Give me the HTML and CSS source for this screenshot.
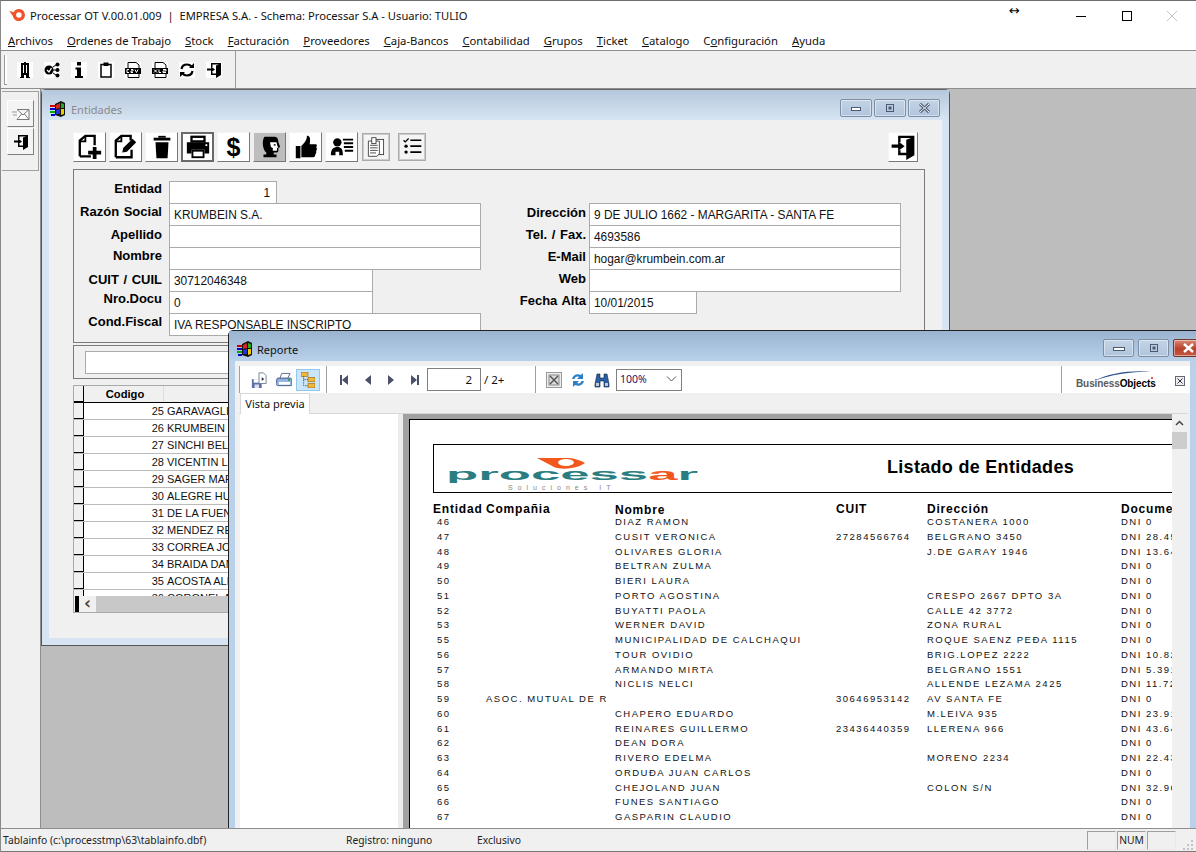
FILE: index.html
```html
<!DOCTYPE html>
<html lang="es">
<head>
<meta charset="utf-8">
<title>Processar OT</title>
<link rel="stylesheet" href="styles.css">
</head>
<body>
<svg class="defs" width="0" height="0" aria-hidden="true">
  <symbol id="winflag" viewBox="0 0 16 16">
    <rect x="0" y="4" width="5" height="2" fill="#c00"/><rect x="0" y="7" width="5" height="2" fill="#00c"/><rect x="0" y="10" width="5" height="2" fill="#0a0"/><rect x="1" y="13" width="4" height="2" fill="#00c"/>
    <path d="M5 3L11 0L15 2V14L11 16L5 14Z" fill="#111"/>
    <path d="M6 4L10 2V7L6 8Z" fill="#d22"/><path d="M11 2L14 3V7L11 7Z" fill="#2a2"/><path d="M6 9L10 8V13L6 13Z" fill="#23d"/><path d="M11 8L14 8V13L11 14Z" fill="#ec0"/>
  </symbol>
  <symbol id="door" viewBox="0 0 16 16">
    <path d="M5 1H15V13L10 16V13H5V10H6.500V11.500H10V3.500L13 2.500H6.500V5H5Z" fill="#000"/>
    <path d="M1 6.500H5V4.500L9 7.500L5 10.500V8.500H1Z" fill="#000"/>
  </symbol>
</svg>
<div class="app">
  <header class="titlebar">
    <svg class="applogo" viewBox="0 0 18 14"><path d="M0 2L5 3.500C6 1 8 0 10.500 0C14.500 0 17 3 17 6.500C17 10.500 14 13 10.500 13C7 13 4.500 10.500 4 7.500Z" fill="#f0532a"/><circle cx="10.500" cy="6.500" r="3" fill="#fff"/></svg>
    <span class="apptitle">Processar OT V.00.01.009 &nbsp;| &nbsp;EMPRESA S.A. - Schema: Processar S.A - Usuario: TULIO</span>
    <span class="resize-hint">↔</span>
    <div class="winctl">
      <span class="ctl"><svg width="10" height="10" viewBox="0 0 10 10"><path d="M0 5.500H10" stroke="#000"/></svg></span>
      <span class="ctl"><svg width="10" height="10" viewBox="0 0 10 10"><rect x=".5" y=".5" width="9" height="9" fill="none" stroke="#000"/></svg></span>
      <span class="ctl"><svg width="10" height="10" viewBox="0 0 10 10"><path d="M0 0L10 10M10 0L0 10" stroke="#c4c4c4"/></svg></span>
    </div>
  </header>
  <nav class="menubar">
    <span><u>A</u>rchivos</span><span><u>O</u>rdenes de Trabajo</span><span><u>S</u>tock</span><span><u>F</u>acturación</span><span><u>P</u>roveedores</span><span><u>C</u>aja-Bancos</span><span><u>C</u>ontabilidad</span><span><u>G</u>rupos</span><span><u>T</u>icket</span><span><u>C</u>atalogo</span><span>C<u>o</u>nfiguración</span><span><u>A</u>yuda</span>
  </nav>
  <div class="toolbar">
    <div class="toolgroup">
      <i class="grip"></i>
      <span class="ti"><svg viewBox="0 0 16 16"><path d="M4 1H7V0H9V1H12V15H13V16H9V13H7V16H3V15H4Z" fill="#000"/><path d="M6 3H7V11H6ZM9 3H10V11H9Z" fill="#fff"/></svg></span>
      <span class="ti"><svg viewBox="0 0 16 16"><circle cx="5" cy="8" r="4.500" fill="#000"/><path d="M3 8L5 10L7.500 6" stroke="#fff" stroke-width="1.300" fill="none"/><circle cx="13.500" cy="2.500" r="2" fill="#000"/><circle cx="13.500" cy="8" r="2" fill="#000"/><circle cx="13.500" cy="13.500" r="2" fill="#000"/><path d="M9 5L12 3M9 8H12M9 11L12 13" stroke="#000"/></svg></span>
      <span class="ti"><svg viewBox="0 0 16 16"><rect x="6" y="0" width="4" height="3.500" fill="#000"/><path d="M4.500 5.500H10V14H12V16H4V14H6V7.500H4.500Z" fill="#000"/></svg></span>
      <span class="ti"><svg viewBox="0 0 16 16"><path d="M3 2.500H13V15H3Z" fill="#fff" stroke="#000" stroke-width="1.500"/><rect x="5.500" y="0.500" width="5" height="3.500" fill="#000"/></svg></span>
      <span class="ti"><svg viewBox="0 0 16 16"><path d="M3 .5H11L14 3V15.500H3Z" fill="#fff" stroke="#000"/><rect x="0" y="6" width="16" height="6" fill="#000"/><path d="M2 7.500H4M2 7.500V10.500H4M6 7.500H8V9H6V10.500H8M10 7.500L11.500 10.500L13 7.500" stroke="#fff" fill="none"/></svg></span>
      <span class="ti"><svg viewBox="0 0 16 16"><path d="M3 .5H11L14 3V15.500H3Z" fill="#fff" stroke="#000"/><rect x="0" y="6" width="16" height="6" fill="#000"/><path d="M2 7.500L5 10.500M5 7.500L2 10.500M7 7.500V10.500H9M11 7.500H14V9H11V10.500H14" stroke="#fff" fill="none"/></svg></span>
      <span class="ti"><svg viewBox="0 0 16 16"><path d="M2.500 7C3 4 5.500 2.500 8 2.500C10 2.500 11.500 3.300 12.500 4.500M13.500 9C13 12 10.500 13.500 8 13.500C6 13.500 4.500 12.700 3.500 11.500" fill="none" stroke="#000" stroke-width="2.200"/><path d="M10 6H15V1ZM6 10H1V15Z" fill="#000"/></svg></span>
      <span class="ti"><svg><use href="#door"/></svg></span>
    </div>
  </div>
  <main class="workspace">
    <aside class="rail">
      <div class="railgroup">
        <span class="railbtn"><svg width="18" height="14" viewBox="0 0 18 14"><path d="M5 2.500H17V12.500H5M5 2.500L11 8L17 2.500M5 12.500L9.500 7M17 12.500L12.500 7" fill="#fff" stroke="#777"/><path d="M0 5H5M1 8H5" stroke="#999"/></svg></span>
        <span class="railbtn"><svg width="16" height="16"><use href="#door"/></svg></span>
      </div>
    </aside>
    <div class="mdi">
      <section class="win win-ent">
        <div class="win-title">
          <svg class="flag"><use href="#winflag"/></svg>
          <span class="win-name off">Entidades</span>
          <div class="wbtns">
            <span class="wb"><svg width="10" height="8" viewBox="0 0 10 8"><rect x=".5" y="3.500" width="9" height="3" fill="#fff" stroke="#4a5a70"/></svg></span>
            <span class="wb"><svg width="10" height="10" viewBox="0 0 10 10"><rect x="1.500" y="1.500" width="7" height="7" fill="none" stroke="#4a5a70"/><rect x="3.500" y="3.500" width="3" height="3" fill="#4a5a70"/></svg></span>
            <span class="wb"><svg width="11" height="10" viewBox="0 0 11 10"><path d="M1 1L10 9M10 1L1 9" stroke="#4a5a70" stroke-width="3"/><path d="M1 1L10 9M10 1L1 9" stroke="#fff"/></svg></span>
          </div>
        </div>
        <div class="win-body">
          <div class="btnrow">
            <span class="bt"><svg viewBox="0 0 28 28"><path d="M3 24V7L9 2H19V12M15 24H3" fill="none" stroke="#000" stroke-width="2.500"/><path d="M9 2V8H3" fill="none" stroke="#000" stroke-width="2"/><path d="M17 14H21V18H26V22H21V27H17V22H12V18H17Z" fill="#000"/></svg></span>
            <span class="bt"><svg viewBox="0 0 28 28"><path d="M3 25V7L9 2H19V7M20 17V25H3" fill="none" stroke="#000" stroke-width="2.500"/><path d="M9 2V8H3" fill="none" stroke="#000" stroke-width="2"/><path d="M10 20L11 15L21 5L25 9L15 19Z" fill="#000"/></svg></span>
            <span class="bt"><svg viewBox="0 0 28 28"><rect x="5" y="4" width="18" height="3" fill="#000"/><rect x="10" y="2" width="8" height="2" fill="#000"/><path d="M7 9H21L20 26H8Z" fill="#000"/></svg></span>
            <span class="bt bt-dark"><svg viewBox="0 0 28 28"><rect x="7" y="3" width="14" height="5" fill="#fff" stroke="#000" stroke-width="2.500"/><path d="M2 9H26V21H21V17H7V21H2Z" fill="#000"/><rect x="8" y="18" width="12" height="7" fill="#fff" stroke="#000" stroke-width="2"/><rect x="22" y="11" width="2" height="2" fill="#fff"/></svg></span>
            <span class="bt bt-dollar">$</span>
            <span class="bt bt-grey"><svg viewBox="0 0 28 28"><path d="M8 3H19C22 3 23 6 23 9L25 14L23 15V18C23 20 21 20 18 20V22H21V25H7V22H10V20C6 17 5 7 8 3Z" fill="#000"/><path d="M14 9H21L22 13L23 14.500L21.500 15V18H17V15L15 14Z" fill="#fff"/><rect x="18" y="11" width="2" height="1.500" fill="#000"/></svg></span>
            <span class="bt"><svg viewBox="0 0 28 28"><path d="M3 13H8V26H3ZM9 13C12 10 15 7 15 2C18 2 19 4 18 11H25C26 12 26 13 25 14C26 16 26 17 25 18C25 20 25 21 24 22C24 24 23 25 22 25H9Z" fill="#000"/></svg></span>
            <span class="bt"><svg viewBox="0 0 28 28"><circle cx="9" cy="9" r="4.500" fill="#000"/><path d="M2 23C2 16 5 14 9 14C13 14 15 16 15 23H11V19H7V23Z" fill="#000"/><path d="M15 6H26M16 10H26M16 14H26M17 18H26" stroke="#000" stroke-width="2"/></svg></span>
            <span class="bt bt-off"><svg viewBox="0 0 26 26"><rect x="9" y="4" width="13" height="18" fill="#fff" stroke="#333"/><path d="M4 6H17V21L14 24H4Z" fill="#fff" stroke="#333"/><rect x="8" y="2" width="5" height="7" fill="#fff" stroke="#333"/><path d="M6 11H15M6 14H15M6 17H15M6 20H13" stroke="#333"/></svg></span>
            <span class="bt bt-off"><svg viewBox="0 0 26 26"><path d="M3 5L5 7L9 3" stroke="#000" stroke-width="1.500" fill="none"/><path d="M11 5H24M11 12H24M11 19H24" stroke="#000" stroke-width="2"/><circle cx="6" cy="12" r="2" fill="#000"/><circle cx="6" cy="19" r="2" fill="#000"/></svg></span>
            <span class="bt bt-exit"><svg viewBox="0 0 16 16"><use href="#door"/></svg></span>
          </div>
          <div class="panel form">
            <div class="col">
              <div class="row"><label>Entidad</label><span class="fld fld-s num">1</span></div>
              <div class="row"><label class="l1">Razón Social</label><span class="fld">KRUMBEIN S.A.</span></div>
              <div class="row"><label class="l2">Apellido</label><span class="fld"></span></div>
              <div class="row"><label class="l1">Nombre</label><span class="fld"></span></div>
              <div class="row"><label class="l3">CUIT / CUIL</label><span class="fld fld-m">30712046348</span></div>
              <div class="row"><label>Nro.Docu</label><span class="fld fld-m">0</span></div>
              <div class="row"><label class="l1">Cond.Fiscal</label><span class="fld">IVA RESPONSABLE INSCRIPTO</span></div>
            </div>
            <div class="col col-r">
              <div class="row"><label class="l2">Dirección</label><span class="fld">9 DE JULIO 1662 - MARGARITA - SANTA FE</span></div>
              <div class="row"><label class="l2">Tel. / Fax.</label><span class="fld">4693586</span></div>
              <div class="row"><label class="l2">E-Mail</label><span class="fld">hogar@krumbein.com.ar</span></div>
              <div class="row"><label class="l2">Web</label><span class="fld"></span></div>
              <div class="row"><label class="l2">Fecha Alta</label><span class="fld fld-s">10/01/2015</span></div>
            </div>
          </div>
          <div class="panel search"><span class="searchbox"></span></div>
          <div class="grid">
            <div class="ghead"><i class="sel"></i><b class="gc1">Codigo</b><b class="gc2"></b></div>
            <div class="gbody">
              <div class="grow"><i class="sel"></i><span class="gc1">25</span><span class="gc2">GARAVAGLIA</span></div>
              <div class="grow"><i class="sel"></i><span class="gc1">26</span><span class="gc2">KRUMBEIN M</span></div>
              <div class="grow"><i class="sel"></i><span class="gc1">27</span><span class="gc2">SINCHI BELEN</span></div>
              <div class="grow"><i class="sel"></i><span class="gc1">28</span><span class="gc2">VICENTIN LILIANA</span></div>
              <div class="grow"><i class="sel"></i><span class="gc1">29</span><span class="gc2">SAGER MARIA</span></div>
              <div class="grow"><i class="sel"></i><span class="gc1">30</span><span class="gc2">ALEGRE HUGO</span></div>
              <div class="grow"><i class="sel"></i><span class="gc1">31</span><span class="gc2">DE LA FUENTE</span></div>
              <div class="grow"><i class="sel"></i><span class="gc1">32</span><span class="gc2">MENDEZ RENE</span></div>
              <div class="grow"><i class="sel"></i><span class="gc1">33</span><span class="gc2">CORREA JOSE</span></div>
              <div class="grow"><i class="sel"></i><span class="gc1">34</span><span class="gc2">BRAIDA DANIEL</span></div>
              <div class="grow"><i class="sel"></i><span class="gc1">35</span><span class="gc2">ACOSTA ALDO</span></div>
              <div class="grow"><i class="sel"></i><span class="gc1">36</span><span class="gc2">CORONEL ANA</span></div>
            </div>
            <div class="gscroll"><i class="gblack"></i><span class="garrow">‹</span><i class="gtrack"></i></div>
          </div>
        </div>
      </section>

      <section class="win win-rep">
        <div class="win-title">
          <svg class="flag"><use href="#winflag"/></svg>
          <span class="win-name">Reporte</span>
          <div class="wbtns">
            <span class="wb"><svg width="12" height="8" viewBox="0 0 12 8"><rect x=".5" y="3.500" width="11" height="3" fill="#fff" stroke="#4a5a70"/></svg></span>
            <span class="wb"><svg width="10" height="10" viewBox="0 0 10 10"><rect x="1.500" y="1.500" width="7" height="7" fill="none" stroke="#4a5a70"/><rect x="3.500" y="3.500" width="3" height="3" fill="#4a5a70"/></svg></span>
            <span class="wb wb-close"><svg width="11" height="10" viewBox="0 0 11 10"><path d="M1 1L10 9M10 1L1 9" stroke="#fff" stroke-width="2.500"/></svg></span>
          </div>
        </div>
        <div class="rep-body">
          <div class="rtool">
            <div class="rgroup">
              <span class="ri"><svg viewBox="0 0 16 18"><rect x="0" y="8" width="11" height="10" fill="#5a6fa8"/><rect x="2" y="8" width="7" height="4" fill="#fff"/><rect x="3" y="14" width="5" height="4" fill="#dde"/><path d="M8 1H13L16 4V13H8Z" fill="#fff" stroke="#6a7a90"/><path d="M11 6L14 8L11 10Z" fill="#334"/></svg></span>
              <span class="ri"><svg viewBox="0 0 17 16"><path d="M6 1L15 1L12 7H4Z" fill="#fff" stroke="#5a6a88"/><path d="M1 7C1 6 2 6 3 6H15C16 6 17 7 17 8V13C17 14 16 14 15 14H3C1 14 0 13 0 12Z" fill="#8fb0e0" stroke="#44587a"/><rect x="3" y="10" width="12" height="3" fill="#fff"/><rect x="13" y="7" width="2" height="2" fill="#2a2"/></svg></span>
              <span class="ri ri-on"><svg viewBox="0 0 16 18"><rect x="0" y="0" width="8" height="5" fill="#f0b83a" stroke="#9a7420" stroke-width=".8"/><rect x="8" y="6" width="8" height="5" fill="#f0b83a" stroke="#9a7420" stroke-width=".8"/><rect x="8" y="13" width="8" height="5" fill="#f0b83a" stroke="#9a7420" stroke-width=".8"/><path d="M3 5V15.500H8M3 8.500H8" stroke="#333" stroke-dasharray="1 1" fill="none"/></svg></span>
            </div>
            <div class="rgroup rnav">
              <svg class="nv" viewBox="0 0 8 10"><rect x="0" y="0" width="2" height="10" fill="#4a4f6a"/><path d="M8 0V10L2 5Z" fill="#4a4f6a"/></svg>
              <svg class="nv" viewBox="0 0 8 10"><path d="M7 0V10L1 5Z" fill="#4a4f6a"/></svg>
              <svg class="nv" viewBox="0 0 8 10"><path d="M1 0V10L7 5Z" fill="#4a4f6a"/></svg>
              <svg class="nv" viewBox="0 0 8 10"><path d="M0 0V10L6 5Z" fill="#4a4f6a"/><rect x="6" y="0" width="2" height="10" fill="#4a4f6a"/></svg>
              <span class="pageinput">2</span>
              <span class="pagetot">/ 2+</span>
            </div>
            <div class="rgroup rgroup3">
              <span class="ri"><svg viewBox="0 0 16 16"><rect x=".5" y=".5" width="15" height="15" fill="#eee" stroke="#999"/><rect x="3" y="3" width="10" height="10" fill="#ddd" stroke="#888"/><path d="M4 4L12 12M12 4L4 12" stroke="#555" stroke-width="1.500"/></svg></span>
              <span class="ri"><svg viewBox="0 0 16 16"><path d="M2 7C3 3 7 1 11 3L13 1V7H7L9 5C7 4 5 5 4.500 7Z" fill="#2c7fc4"/><path d="M14 9C13 13 9 15 5 13L3 15V9H9L7 11C9 12 11 11 11.500 9Z" fill="#2c7fc4"/></svg></span>
              <span class="ri"><svg viewBox="0 0 16 16"><path d="M3 2H6V6H10V2H13L15 12V15H10V9H6V15H1V12Z" fill="#2a5fa8" stroke="#123" stroke-width=".6"/><rect x="2" y="11" width="3" height="3" fill="#bcd"/><rect x="11" y="11" width="3" height="3" fill="#bcd"/></svg></span>
              <span class="combo">100%<svg width="11" height="6" viewBox="0 0 11 6"><path d="M1 .5L5.500 5L10 .5" fill="none" stroke="#555"/></svg></span>
            </div>
            <div class="bo">
              <svg class="bo-arc" width="62" height="12" viewBox="0 0 62 12"><path d="M2 11C16 3 38 0 59 1.500C38 1.500 18 5 2 11Z" fill="#2c4f8f"/><circle cx="60" cy="8" r="1" fill="#d22"/></svg>
              <span class="bo-text"><span class="bo-a">Business</span>Objects</span>
            </div>
            <span class="rclose"><svg width="10" height="10" viewBox="0 0 10 10"><rect x=".5" y=".5" width="9" height="9" fill="#eee" stroke="#667"/><path d="M2.500 2.500L7.500 7.500M7.500 2.500L2.500 7.500" stroke="#334"/></svg></span>
          </div>
          <div class="rtabs"><span class="rtab">Vista previa</span></div>
          <div class="rview">
            <div class="rtree"></div>
            <div class="rsplit"></div>
            <div class="rpagewrap">
              <div class="rpage">
                <div class="rhead">
                  <div class="logo">
                    <svg class="eye" width="50" height="12" viewBox="0 0 50 12"><path d="M0 0H17C24 -2 40 0 48 5C40 11 24 12 17 9Z" fill="#f2571d"/><ellipse cx="29" cy="4.500" rx="8" ry="3.500" fill="#fff"/></svg>
                    <div class="logotext">process<span class="logo-o">a</span>r</div>
                    <div class="logosub">Soluciones IT</div>
                  </div>
                  <h1 class="rtitle">Listado de Entidades</h1>
                </div>
                <div class="rcols rr">
                  <b>Entidad</b><b>Compañia</b><b class="down">Nombre</b><b>CUIT</b><b>Dirección</b><b>Documento</b>
                </div>
                <div class="rows">
                  <div class="rr"><i>46</i><i></i><i>DIAZ RAMON</i><i></i><i>COSTANERA 1000</i><i>DNI 0</i></div>
                  <div class="rr"><i>47</i><i></i><i>CUSIT VERONICA</i><i>27284566764</i><i>BELGRANO 3450</i><i>DNI 28.452.110</i></div>
                  <div class="rr"><i>48</i><i></i><i>OLIVARES GLORIA</i><i></i><i>J.DE GARAY 1946</i><i>DNI 13.640.220</i></div>
                  <div class="rr"><i>49</i><i></i><i>BELTRAN ZULMA</i><i></i><i></i><i>DNI 0</i></div>
                  <div class="rr"><i>50</i><i></i><i>BIERI LAURA</i><i></i><i></i><i>DNI 0</i></div>
                  <div class="rr"><i>51</i><i></i><i>PORTO AGOSTINA</i><i></i><i>CRESPO 2667 DPTO 3A</i><i>DNI 0</i></div>
                  <div class="rr"><i>52</i><i></i><i>BUYATTI PAOLA</i><i></i><i>CALLE 42 3772</i><i>DNI 0</i></div>
                  <div class="rr"><i>53</i><i></i><i>WERNER DAVID</i><i></i><i>ZONA RURAL</i><i>DNI 0</i></div>
                  <div class="rr"><i>55</i><i></i><i>MUNICIPALIDAD DE CALCHAQUI</i><i></i><i>ROQUE SAENZ PEÐA 1115</i><i>DNI 0</i></div>
                  <div class="rr"><i>56</i><i></i><i>TOUR OVIDIO</i><i></i><i>BRIG.LOPEZ 2222</i><i>DNI 10.820.110</i></div>
                  <div class="rr"><i>57</i><i></i><i>ARMANDO MIRTA</i><i></i><i>BELGRANO 1551</i><i>DNI 5.391.220</i></div>
                  <div class="rr"><i>58</i><i></i><i>NICLIS NELCI</i><i></i><i>ALLENDE LEZAMA 2425</i><i>DNI 11.720.330</i></div>
                  <div class="rr"><i>59</i><i class="co">ASOC. MUTUAL DE RIESGOS</i><i></i><i>30646953142</i><i>AV SANTA FE</i><i>DNI 0</i></div>
                  <div class="rr"><i>60</i><i></i><i>CHAPERO EDUARDO</i><i></i><i>M.LEIVA 935</i><i>DNI 23.910.440</i></div>
                  <div class="rr"><i>61</i><i></i><i>REINARES GUILLERMO</i><i>23436440359</i><i>LLERENA 966</i><i>DNI 43.640.550</i></div>
                  <div class="rr"><i>62</i><i></i><i>DEAN DORA</i><i></i><i></i><i>DNI 0</i></div>
                  <div class="rr"><i>63</i><i></i><i>RIVERO EDELMA</i><i></i><i>MORENO 2234</i><i>DNI 22.430.660</i></div>
                  <div class="rr"><i>64</i><i></i><i>ORDUÐA JUAN CARLOS</i><i></i><i></i><i>DNI 0</i></div>
                  <div class="rr"><i>65</i><i></i><i>CHEJOLAND JUAN</i><i></i><i>COLON S/N</i><i>DNI 32.960.770</i></div>
                  <div class="rr"><i>66</i><i></i><i>FUNES SANTIAGO</i><i></i><i></i><i>DNI 0</i></div>
                  <div class="rr"><i>67</i><i></i><i>GASPARIN CLAUDIO</i><i></i><i></i><i>DNI 0</i></div>
                </div>
              </div>
            </div>
            <div class="rscroll"><span class="rs-up"><svg width="9" height="6" viewBox="0 0 9 6"><path d="M1 5L4.500 1.500L8 5" fill="none" stroke="#444" stroke-width="1.500"/></svg></span><i class="rs-thumb"></i></div>
          </div>
        </div>
      </section>
    </div>
  </main>
  <footer class="statusbar">
    <span class="st st-1">Tablainfo (c:\processtmp\63\tablainfo.dbf)</span>
    <span class="st st-2">Registro: ninguno</span>
    <span class="st st-3">Exclusivo</span>
    <div class="stpanels"><span class="sp"></span><span class="sp">NUM</span><span class="sp"></span></div>
    <svg class="sgrip" width="12" height="12" viewBox="0 0 12 12"><path d="M9 2h2v2H9zM9 6h2v2H9zM5 6h2v2H5zM9 10h2v2H9zM5 10h2v2H5zM1 10h2v2H1z" fill="#c4c4c4"/></svg>
  </footer>
</div>
</body>
</html>
```

FILE: styles.css
```css
* { box-sizing: border-box; }
html, body { margin: 0; padding: 0; }
body { width: 1196px; height: 852px; overflow: hidden; background: #f0f0f0; font-family: "Liberation Sans", Arial, sans-serif; color: #000; }
.defs { position: absolute; }
i { font-style: normal; }

.app { width: 1196px; height: 852px; display: flex; flex-direction: column; border-top: 1px solid #6e6e6e; border-left: 1px solid #8a8a8a; overflow: hidden; }

.titlebar { height: 29px; flex: none; background: #fff; display: flex; align-items: center; position: relative; padding-left: 8px; }
.applogo { width: 17px; height: 13px; flex: none; }
.apptitle { font: 11.200px "Noto Sans", sans-serif; margin-left: 4px; white-space: nowrap; color: #111; }
.resize-hint { position: absolute; left: 1008px; top: 0; font: 13px "DejaVu Sans", sans-serif; line-height: 20px; }
.winctl { margin-left: auto; display: flex; padding-right: 1px; }
.ctl { width: 45.500px; height: 29px; display: flex; align-items: center; justify-content: center; }

.menubar { height: 20px; flex: none; background: #fff; display: flex; gap: 14px; padding-left: 7px; font: 11.300px "Noto Sans", sans-serif; line-height: 22px; white-space: nowrap; }
.menubar span { color: #111; }

.toolbar { height: 39px; flex: none; background: #f0f0f0; border-top: 1px solid #8e8e8e; border-bottom: 1px solid #8e8e8e; position: relative; }
.toolgroup { width: 235px; height: 37px; border-right: 1px solid #9a9a9a; display: flex; align-items: center; padding-left: 3px; }
.grip { width: 3px; height: 30px; margin-right: 10px; border-left: 1px solid #9a9a9a; border-bottom: 1px solid #9a9a9a; background: #fff; flex: none; }
.ti { width: 16px; height: 16px; margin-right: 11px; background: #fff; flex: none; display: block; }
.ti svg { width: 16px; height: 16px; display: block; }

.workspace { flex: 1; display: flex; min-height: 0; }
.rail { width: 40px; flex: none; background: #f0f0f0; border-right: 1px solid #8e8e8e; padding: 2px 1px 0 1px; position: relative; }
.railgroup { height: 80px; width: 37px; border-top: 1px solid #a0a0a0; border-bottom: 1px solid #a0a0a0; border-right: 1px solid #a0a0a0; padding: 8px 0 0 5px; display: flex; flex-direction: column; gap: 1px; }
.railbtn { width: 27px; height: 27px; background: #f4f4f4; border: 1px solid; border-color: #fff #808080 #808080 #fff; display: flex; align-items: center; justify-content: center; }

.mdi { flex: 1; background: #bdbdbd; position: relative; overflow: hidden; }

.win { position: absolute; display: flex; flex-direction: column; }
.win-ent { left: 0; top: 0; width: 909px; height: 557px; background: #d6e4f3; border: 1px solid #555; border-top-color: #666; border-radius: 5px 5px 0 0; }
.win-rep { left: 187px; top: 241px; width: 980px; height: 520px; background: #b9d1ea; border: 1px solid #222; border-radius: 5px 5px 0 0; }

.win-title { height: 30px; flex: none; display: flex; align-items: center; padding-left: 8px; }
.win-ent .win-title { background: linear-gradient(#b6c8dc, #d6e4f3); padding-top: 8px; }
.win-rep .win-title { background: linear-gradient(#9ab3d0, #b9d1ea); padding-top: 6px; }
.flag { width: 16px; height: 16px; flex: none; }
.win-name { font: 11px "Noto Sans", sans-serif; margin-left: 5px; color: #111; }
.win-rep .win-name { margin-left: 4px; }
.win-name.off { color: #8a8a8a; }
.wbtns { margin-left: auto; display: flex; gap: 2px; margin-right: 9px; margin-top: -2px; }
.win-rep .wbtns { margin-right: 3px; gap: 4px; margin-top: -2px; }
.wb { width: 32px; height: 18px; display: flex; align-items: center; justify-content: center; border: 1px solid #7d8ea5; border-radius: 2px; background: linear-gradient(#c4d4e6, #b0c4dc); box-shadow: inset 0 0 0 1px rgba(255,255,255,.45); }
.win-rep .wb { width: 31px; }
.wb-close { background: linear-gradient(#d88a78, #b8402a 55%, #c65a44); border-color: #70382c; }

.win-body { flex: 1; margin: 0 7px 7px 7px; background: #f0f0f0; padding: 12px 24px 0 24px; min-height: 0; overflow: hidden; }
.btnrow { display: flex; gap: 3px; height: 37px; align-items: flex-start; position: relative; }
.bt { width: 33px; height: 30px; flex: none; background: #fff; border: 1px solid; border-color: #f4f4f4 #777 #777 #f4f4f4; display: flex; align-items: center; justify-content: center; }
.bt svg { width: 26px; height: 26px; display: block; }
.bt-dark { border: 2px solid #6a6a6a; }
.bt-grey { background: #bdbdbd; border-color: #eee #777 #777 #eee; }
.bt-dollar { font: bold 25px "Liberation Sans", sans-serif; }
.bt-off { width: 28px; height: 28px; border: 1px solid #aaa; box-shadow: inset 0 0 0 1px #ccc; margin: 1px 4px 0 1px; background: #f4f4f4; }
.bt-off svg { width: 22px; height: 22px; }
.bt-exit { width: 30px; margin-left: auto; margin-right: 0; }
.panel { border: 1px solid #7a7a7a; background: #f0f0f0; }
.form { height: 174px; display: flex; padding-top: 11px; width: 852px; }
.col { width: 408px; flex: none; }
.col-r { padding-top: 22px; width: 428px; }
.row { height: 22px; display: flex; }
.row label { width: 88px; flex: none; text-align: right; font: bold 13px "Liberation Sans", sans-serif; line-height: 16px; word-spacing: 1px; white-space: nowrap; margin-right: 7px; }
.row .l1 { padding-top: 1px; }
.row .l2 { padding-top: 2px; }
.row .l3 { padding-top: 3px; }
.col-r .row label { width: 104px; margin-right: 3px; }
.fld { width: 312px; height: 23px; flex: none; background: #fff; border: 1px solid #aaa; font: 11.900px "Liberation Sans", sans-serif; line-height: 22px; padding-left: 4px; color: #111; white-space: nowrap; overflow: hidden; }
.fld-m { width: 204px; }
.fld-s { width: 108px; }
.num { text-align: right; padding-right: 6px; }
.search { height: 34px; margin-top: 2px; padding: 5px 0 0 11px; width: 852px; }
.searchbox { display: block; width: 600px; height: 23px; background: #fff; border: 1px solid #aaa; }

.grid { margin-top: 6px; width: 852px; height: 228px; border: 1px solid #aaa; background: #fff; position: relative; overflow: hidden; display: flex; flex-direction: column; }
.ghead { height: 17px; flex: none; display: flex; border-bottom: 1px solid #000; background: #f0f0f0; font: bold 11.200px "Liberation Sans", sans-serif; line-height: 17px; }
.sel { width: 10px; flex: none; background: #f0f0f0; border-right: 1px solid #000; border-bottom: 1px solid #000; display: block; }
.ghead .gc1 { width: 80px; text-align: center; border-right: 1px solid #ddd; padding-left: 3px; }
.ghead .gc2 { flex: 1; }
.gbody { height: 193px; flex: none; overflow: hidden; }
.grow { height: 17px; display: flex; border-bottom: 1px solid #bbb; font: 11px "Liberation Sans", sans-serif; line-height: 17px; color: #111; white-space: nowrap; }
.grow .gc1 { width: 80px; text-align: right; }
.grow .gc2 { padding-left: 3px; }
.gscroll { height: 16px; display: flex; background: #f0f0f0; }
.gblack { width: 4px; background: #000; margin-left: 1px; }
.garrow { width: 17px; text-align: center; font: bold 17px "DejaVu Sans", sans-serif; line-height: 14px; color: #444; }
.gtrack { flex: 1; background: #c8c8c8; }

.rep-body { flex: 1; margin: 0 6px 0 6px; background: #f0f0f0; padding: 5px 2px 0 4px; min-height: 0; overflow: hidden; display: flex; flex-direction: column; width: 955px; }
.rtool { height: 27px; flex: none; background: #fff; display: flex; align-items: flex-start; position: relative; width: 951px; }
.rgroup { height: 27px; display: flex; align-items: center; border-left: 1px solid #a0a0a0; flex: none; }
.rgroup:first-child { width: 87px; padding-left: 11px; gap: 9px; }
.ri { width: 16px; height: 16px; flex: none; display: block; }
.ri svg { width: 16px; height: 16px; display: block; }
.ri-on { width: 24px; height: 22px; padding: 2px 4px; background: #cbe6fb; border: 1px solid #92c8f0; margin-left: -5px; }
.ri-on svg { width: 14px; height: 16px; }
.rnav { width: 209px; padding-left: 13px; }
.nv { width: 8px; height: 10px; margin-right: 15.500px; flex: none; }
.pageinput { width: 54px; height: 23px; border: 1px solid #808080; margin-left: -7px; text-align: right; padding-right: 8px; font: 11.500px/21px "Noto Sans", sans-serif; color: #111; flex: none; }
.pagetot { margin-left: 3px; font: 11.500px "Noto Sans", sans-serif; color: #111; }
.rgroup3 { padding-left: 10px; gap: 8px; }
.combo { width: 66px; height: 22px; margin-left: -2px; border: 1px solid #808080; display: flex; align-items: center; justify-content: space-between; padding: 0 4px 1px 3px; font: 10.500px "Noto Sans", sans-serif; color: #301060; }
.bo { position: absolute; left: 822px; top: 0; height: 27px; width: 112px; border-left: 1px solid #a0a0a0; }
.bo-arc { position: absolute; left: 30px; top: 4px; }
.bo-text { position: absolute; left: 14px; top: 12px; font: bold 10px "Liberation Sans", sans-serif; line-height: 11px; color: #000; letter-spacing: -.1px; white-space: nowrap; }
.bo-a { color: #5a5a5a; }
.rclose { position: absolute; left: 936px; top: 6px; display: block; }
.rtabs { height: 21px; flex: none; border-bottom: 1px solid #d8d8d8; padding-left: 1px; }
.rtab { display: block; width: 70px; height: 21px; background: #fff; border: 1px solid #d8d8d8; border-bottom: 0; font: 11px "Noto Sans", sans-serif; line-height: 20px; text-align: center; color: #111; }
.rview { flex: 1; display: flex; min-height: 0; }
.rtree { width: 158px; flex: none; background: #fff; margin-left: 1px; }
.rsplit { width: 5px; flex: none; background: #ececec; }
.rpagewrap { width: 769px; flex: none; background: #a0a0a0; padding: 5px 0 0 6px; overflow: hidden; }
.rpage { width: 900px; height: 500px; background: #fff; border: 1px solid #000; border-width: 1px 0 0 1px; padding: 24px 0 0 23px; }
.rhead { width: 800px; height: 49px; border: 1px solid #000; border-right: 0; position: relative; }
.logo { position: absolute; left: 11px; top: 8px; width: 256px; height: 36px; }
.eye { position: absolute; left: 92px; top: 5px; }
.logotext { position: absolute; left: 1px; top: 12px; font: bold 17px "Liberation Sans", sans-serif; line-height: 20px; color: #2a7d80; transform: scaleX(3.100); transform-origin: 0 50%; white-space: nowrap; }
.logo-o { color: #f2571d; }
.logosub { position: absolute; left: 63px; top: 31px; font: 7px "Liberation Sans", sans-serif; line-height: 8px; color: #888; letter-spacing: 5px; white-space: nowrap; }
.rtitle { position: absolute; left: 453px; top: 12px; margin: 0; font: bold 18px "Liberation Sans", sans-serif; line-height: 20px; letter-spacing: .3px; white-space: nowrap; }
.rr { display: grid; grid-template-columns: 53px 129px 221px 91px 194px 100px; white-space: nowrap; }
.rcols { margin-top: 9px; height: 14px; font: bold 12px "Liberation Sans", sans-serif; line-height: 14px; letter-spacing: .8px; }
.rcols .down { position: relative; top: 1px; }
.rows { margin-top: -1px; }
.rows .rr { height: 14.750px; font: 9.500px "Liberation Sans", sans-serif; line-height: 14.750px; letter-spacing: 1.500px; color: #111; }
.rows .rr i:first-child { padding-left: 4px; }
.rows .rr i { min-width: 0; overflow: hidden; }
.rows .rr .co { width: 122px; }
.rscroll { width: 15px; flex: none; background: #f0f0f0; }
.rs-up { display: flex; height: 18px; align-items: center; justify-content: center; }
.rs-thumb { display: block; height: 17px; background: #cdcdcd; }

.statusbar { height: 24px; flex: none; background: #f0f0f0; border-top: 1px solid #8e8e8e; border-bottom: 1px solid #777; position: relative; display: flex; align-items: center; font: 10.300px "Noto Sans", sans-serif; color: #222; white-space: nowrap; }
.st-1 { margin-left: 2px; width: 343px; }
.st-2 { width: 131px; }
.stpanels { position: absolute; left: 1086px; top: 2px; display: flex; gap: 1px; height: 19px; }
.sp { width: 29px; height: 19px; border: 1px solid; border-color: #a0a0a0 #e8e8e8 #e8e8e8 #a0a0a0; text-align: center; line-height: 17px; }
.sgrip { position: absolute; right: 2px; bottom: 1px; }
```
